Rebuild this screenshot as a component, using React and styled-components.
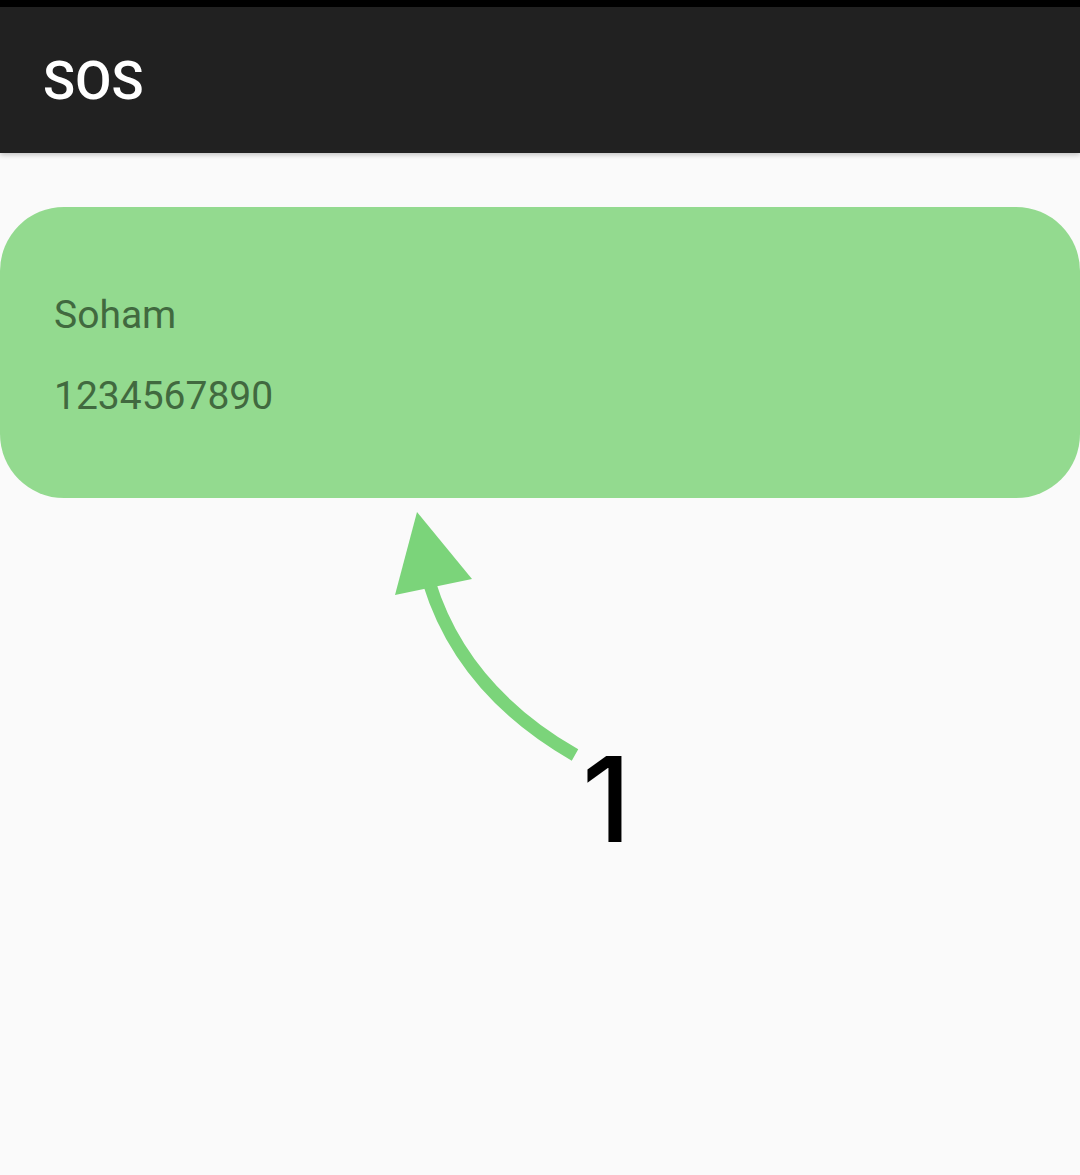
import React from "react";
import styled, { createGlobalStyle } from "styled-components";

const GlobalStyle = createGlobalStyle`
  html, body {
    margin: 0;
    padding: 0;
    background: #fafafa;
    font-family: Roboto, "Noto Sans", sans-serif;
  }
`;

const Screen = styled.div`
  position: relative;
  width: 1080px;
  min-height: 1175px;
  background: #fafafa;
  overflow: hidden;
`;

const StatusBar = styled.div`
  height: 7px;
  background: #000;
`;

const AppBar = styled.header`
  height: 146px;
  display: flex;
  align-items: center;
  padding: 0 43px;
  background: #212121;
  box-shadow: 0 2px 5px rgba(0, 0, 0, 0.22);
  position: relative;
  z-index: 1;
`;

const Title = styled.h1`
  margin: 0;
  padding-top: 3px;
  font-size: 53px;
  font-weight: 500;
  line-height: 1;
  color: #fff;
`;

const Content = styled.main`
  padding-top: 54px;
`;

const ContactCard = styled.div`
  display: flex;
  flex-direction: column;
  gap: 36px;
  height: 291px;
  box-sizing: border-box;
  padding: 86px 54px 80px;
  border-radius: 64px;
  background: #93da8f;
`;

const Line = styled.div`
  font-size: 39px;
  line-height: 45px;
  color: #41693f;
`;

const Annotation = styled.svg`
  position: absolute;
  left: 0;
  top: 0;
  pointer-events: none;
`;

const Marker = styled.span`
  position: absolute;
  left: 582px;
  top: 740px;
  font-family: Inter, Roboto, sans-serif;
  font-size: 118px;
  font-weight: 500;
  line-height: 1;
  color: #000;
`;

const App = () => {
  return (
    <>
      <GlobalStyle />
      <Screen>
        <StatusBar />
        <AppBar>
          <Title>SOS</Title>
        </AppBar>
        <Content>
          <ContactCard>
            <Line>Soham</Line>
            <Line>1234567890</Line>
          </ContactCard>
        </Content>

        <Annotation width="1080" height="1175" viewBox="0 0 1080 1175">
          <path
            d="M429 582 Q462 690 575 755"
            fill="none"
            stroke="#7bd47a"
            strokeWidth="13"
          />
          <polygon points="417,512 472,579 395,595" fill="#7bd47a" />
        </Annotation>
        <Marker>1</Marker>
      </Screen>
    </>
  );
};

export default App;
